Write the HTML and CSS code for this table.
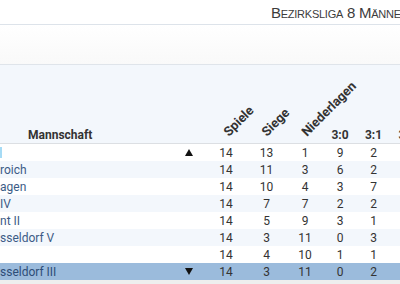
FILE: index.html
```html
<!DOCTYPE html>
<html lang="de">
<head>
<meta charset="utf-8">
<title>Bezirksliga 8 Männer</title>
<link rel="stylesheet" href="styles.css">
</head>
<body>
<header class="topbar">
  <h1 class="title">Bezirksliga 8 Männer</h1>
</header>
<div class="band"></div>
<section class="table">
  <div class="row head">
    <div class="cell name"><span class="team-head">Mannschaft</span></div>
    <div class="cell arrow"></div>
    <div class="cell num rot r1"><span>Spiele</span></div>
    <div class="cell num rot r2"><span>Siege</span></div>
    <div class="cell num rot r3"><span>Niederlagen</span></div>
    <div class="cell num">3:0</div>
    <div class="cell num">3:1</div>
    <div class="cell num">3:2</div>
  </div>
  <div class="row">
    <div class="cell name"><span class="cut"></span></div>
    <div class="cell arrow"><svg width="8" height="7" viewBox="0 0 8 7"><polygon points="4,0 8,7 0,7" fill="#111"/></svg></div>
    <div class="cell num">14</div><div class="cell num">13</div><div class="cell num">1</div><div class="cell num">9</div><div class="cell num">2</div><div class="cell num">3</div>
  </div>
  <div class="row alt">
    <div class="cell name">roich</div>
    <div class="cell arrow"></div>
    <div class="cell num">14</div><div class="cell num">11</div><div class="cell num">3</div><div class="cell num">6</div><div class="cell num">2</div><div class="cell num">3</div>
  </div>
  <div class="row">
    <div class="cell name">agen</div>
    <div class="cell arrow"></div>
    <div class="cell num">14</div><div class="cell num">10</div><div class="cell num">4</div><div class="cell num">3</div><div class="cell num">7</div><div class="cell num">0</div>
  </div>
  <div class="row alt">
    <div class="cell name">IV</div>
    <div class="cell arrow"></div>
    <div class="cell num">14</div><div class="cell num">7</div><div class="cell num">7</div><div class="cell num">2</div><div class="cell num">2</div><div class="cell num">3</div>
  </div>
  <div class="row">
    <div class="cell name">nt II</div>
    <div class="cell arrow"></div>
    <div class="cell num">14</div><div class="cell num">5</div><div class="cell num">9</div><div class="cell num">3</div><div class="cell num">1</div><div class="cell num">1</div>
  </div>
  <div class="row alt">
    <div class="cell name">sseldorf V</div>
    <div class="cell arrow"></div>
    <div class="cell num">14</div><div class="cell num">3</div><div class="cell num">11</div><div class="cell num">0</div><div class="cell num">3</div><div class="cell num">0</div>
  </div>
  <div class="row">
    <div class="cell name"></div>
    <div class="cell arrow"></div>
    <div class="cell num">14</div><div class="cell num">4</div><div class="cell num">10</div><div class="cell num">1</div><div class="cell num">1</div><div class="cell num">2</div>
  </div>
  <div class="row sel">
    <div class="cell name">sseldorf III</div>
    <div class="cell arrow"><svg width="8" height="7" viewBox="0 0 8 7"><polygon points="0,0 8,0 4,7" fill="#111"/></svg></div>
    <div class="cell num">14</div><div class="cell num">3</div><div class="cell num">11</div><div class="cell num">0</div><div class="cell num">2</div><div class="cell num">1</div>
  </div>
</section>
<div class="foot"></div>
</body>
</html>
```
FILE: styles.css
```css
html, body {
  margin: 0;
  padding: 0;
  width: 400px;
  height: 284px;
  overflow: hidden;
  background: #eeeeee;
}
body {
  font-family: Roboto, "Liberation Sans", sans-serif;
  font-size: 12px;
  color: #333;
}
.topbar {
  height: 24px;
  background: #fff;
  border-bottom: 1px solid #dde3ea;
  overflow: hidden;
}
.title {
  margin: 0;
  padding-left: 271px;
  padding-top: 1px;
  font-family: "Liberation Sans", Arial, sans-serif;
  font-size: 15px;
  letter-spacing: -0.25px;
  font-weight: normal;
  font-variant: small-caps;
  color: #3c3c3c;
  line-height: 24px;
  white-space: nowrap;
}
.band {
  height: 39px;
  background: linear-gradient(#ffffff, #f9f9f9);
  border-bottom: 1px solid #dfe4ea;
}
.table {
  display: flex;
  flex-direction: column;
}
.row {
  display: grid;
  grid-template-columns: 184px 22px 40px 41px 36px 34px 33px 34px;
  height: 17px;
  align-items: center;
  background: #fff;
  white-space: nowrap;
}
.row.alt { background: #f3f7fc; }
.row.sel { background: #9bbbdc; }
.row.head {
  height: 78px;
  background: #f3f7fc;
  border-bottom: 1px solid #dcdfe3;
  align-items: end;
  font-weight: bold;
  color: #333;
}
.cell {
  line-height: 14px;
  overflow: visible;
}
.row.head .cell { padding-bottom: 1px; }
.name {
  color: #3c5b86;
  overflow: hidden;
  display: flex;
  align-items: center;
}
.row.sel .name { color: #2e4d77; }
.team-head {
  padding-left: 28px;
  color: #333;
}
.cut {
  display: inline-block;
  width: 2px;
  height: 11px;
  background: #a6dbf5;
}
.arrow {
  display: flex;
  align-items: center;
  padding-left: 1px;
}
.arrow svg { display: block; }
.num { text-align: center; }
.rot { text-align: left; }
.rot span {
  display: inline-block;
  font-size: 13px;
  transform-origin: 0 100%;
  transform: rotate(-45deg);
  margin-bottom: 3px;
}
.r1 span { margin-left: 25px; }
.r2 span { margin-left: 23px; }
.r3 span { margin-left: 22px; }
.foot {
  height: 4px;
  background: #eeeeee;
}
```
